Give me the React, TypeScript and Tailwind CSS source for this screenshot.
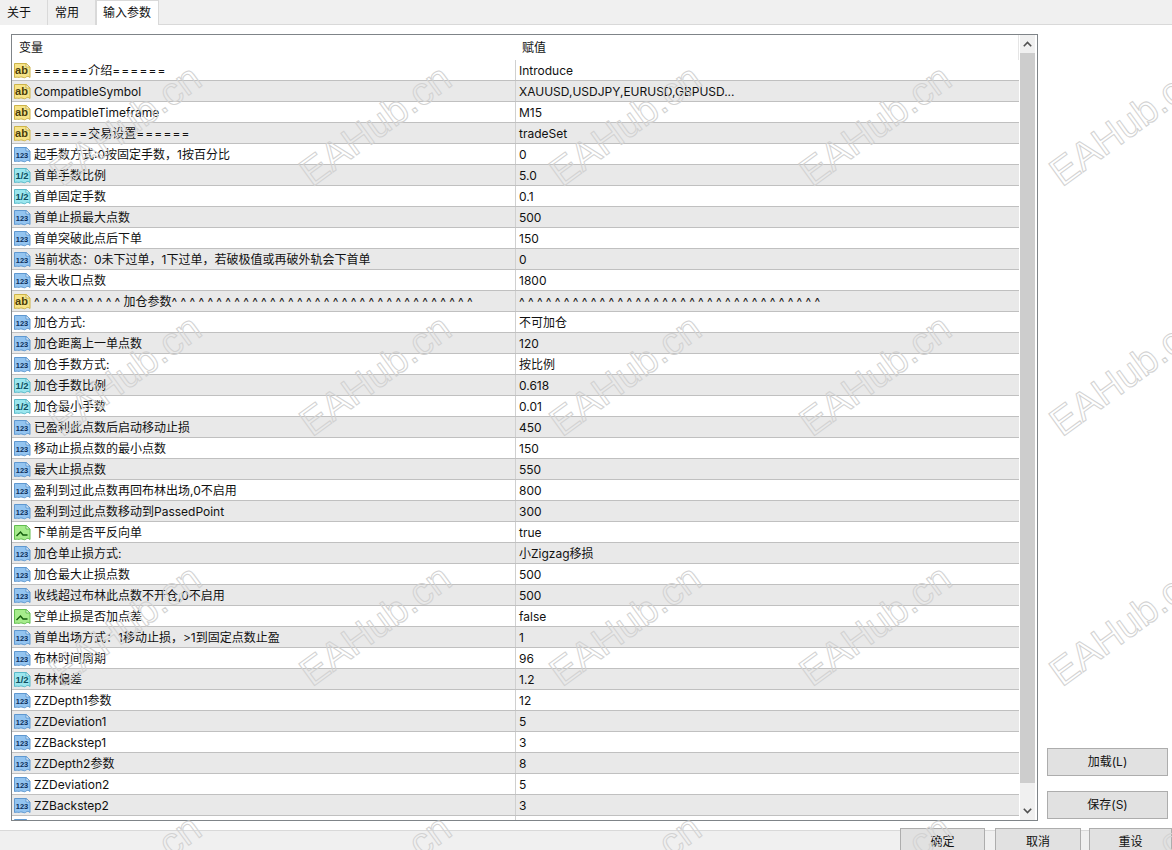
import React from 'react';

type ParamType = 'str' | 'int' | 'dbl' | 'bool';
type Param = [ParamType, string, string];

const params: Param[] = [
  ['str', '======介绍======', 'Introduce'],
  ['str', 'CompatibleSymbol', 'XAUUSD,USDJPY,EURUSD,GBPUSD...'],
  ['str', 'CompatibleTimeframe', 'M15'],
  ['str', '======交易设置======', 'tradeSet'],
  ['int', '起手数方式:0按固定手数，1按百分比', '0'],
  ['dbl', '首单手数比例', '5.0'],
  ['dbl', '首单固定手数', '0.1'],
  ['int', '首单止损最大点数', '500'],
  ['int', '首单突破此点后下单', '150'],
  ['int', '当前状态：0未下过单，1下过单，若破极值或再破外轨会下首单', '0'],
  ['int', '最大收口点数', '1800'],
  ['str', '^^^^^^^^^^加仓参数^^^^^^^^^^^^^^^^^^^^^^^^^^^^^^^^^^', '^^^^^^^^^^^^^^^^^^^^^^^^^^^^^^^^^^'],
  ['int', '加仓方式:', '不可加仓'],
  ['int', '加仓距离上一单点数', '120'],
  ['int', '加仓手数方式:', '按比例'],
  ['dbl', '加仓手数比例', '0.618'],
  ['dbl', '加仓最小手数', '0.01'],
  ['int', '已盈利此点数后启动移动止损', '450'],
  ['int', '移动止损点数的最小点数', '150'],
  ['int', '最大止损点数', '550'],
  ['int', '盈利到过此点数再回布林出场,0不启用', '800'],
  ['int', '盈利到过此点数移动到PassedPoint', '300'],
  ['bool', '下单前是否平反向单', 'true'],
  ['int', '加仓单止损方式:', '小Zigzag移损'],
  ['int', '加仓最大止损点数', '500'],
  ['int', '收线超过布林此点数不开仓,0不启用', '500'],
  ['bool', '空单止损是否加点差', 'false'],
  ['int', '首单出场方式：1移动止损，>1到固定点数止盈', '1'],
  ['int', '布林时间周期', '96'],
  ['dbl', '布林偏差', '1.2'],
  ['int', 'ZZDepth1参数', '12'],
  ['int', 'ZZDeviation1', '5'],
  ['int', 'ZZBackstep1', '3'],
  ['int', 'ZZDepth2参数', '8'],
  ['int', 'ZZDeviation2', '5'],
  ['int', 'ZZBackstep2', '3'],
  ['int', '', ''],
];

// 文件形状的小图标，底边带波浪
const iconColors: Record<ParamType, { fill: string; stroke: string; ink: string }> = {
  str: { fill: '#f7e488', stroke: '#cdb44a', ink: '#4a3c08' },
  int: { fill: '#93c4f0', stroke: '#5f98d0', ink: '#0c2f5c' },
  dbl: { fill: '#9be6ee', stroke: '#58b8c8', ink: '#0e4f60' },
  bool: { fill: '#a6ec8c', stroke: '#62bd50', ink: '#135c0c' },
};

const iconLabel: Record<ParamType, string> = { str: 'ab', int: '123', dbl: '1/2', bool: '' };

function ParamIcon({ type }: { type: ParamType }) {
  const c = iconColors[type];
  return (
    <svg width="17" height="17" viewBox="0 0 17 17" className="shrink-0">
      <path
        d="M0.5 1.5H12L16 5V15.5C14.5 14 13 14 11.5 15.5C10 16.5 8.5 14.5 6.5 15C5 16 2.5 14.5 0.5 15.5Z"
        fill={c.fill}
        stroke={c.stroke}
      />
      <path d="M12 1.5V5H16Z" fill="#fff" stroke={c.stroke} />
      {type === 'bool' ? (
        <path d="M2.5 12L6.5 8L9 11H13.5" fill="none" stroke={c.ink} strokeWidth="1.4" />
      ) : (
        <text
          x={type === 'str' ? 7.5 : 8}
          y={type === 'str' ? 11.5 : 12}
          textAnchor="middle"
          fill={c.ink}
          fontFamily="'Liberation Sans', sans-serif"
          fontWeight={700}
          fontSize={type === 'str' ? 11 : type === 'int' ? 7.5 : 9.5}
        >
          {iconLabel[type]}
        </text>
      )}
    </svg>
  );
}

// = 和 ^ 在原图字体里更宽，这里单独调字距
function Label({ text }: { text: string }) {
  return (
    <span className="translate-y-[1px]">
      {text.split(/(=+|\^+)/).map((part, i) => {
        if (part.startsWith('=')) {
          return (
            <span key={i} className="tracking-[1.1px]">
              {part}
            </span>
          );
        }
        if (part.startsWith('^')) {
          return (
            <span key={i} className="tracking-[3.3px]">
              {part}
            </span>
          );
        }
        return part;
      })}
    </span>
  );
}

function Row({ param, index }: { param: Param; index: number }) {
  const [type, name, value] = param;
  return (
    <div
      className={`flex h-[21px] shrink-0 border-b border-[#c0c0c0] ${index % 2 === 1 ? 'bg-[#e9e9e9]' : 'bg-white'}`}
    >
      <div className="flex w-[504px] items-center gap-[3px] overflow-hidden border-r border-[#d0d0d0] pl-[2px] whitespace-nowrap">
        <ParamIcon type={type} />
        <Label text={name} />
      </div>
      <div className="flex flex-1 items-center overflow-hidden pl-[3px] whitespace-nowrap">
        <Label text={value} />
      </div>
    </div>
  );
}

function Tab({ label, active, className }: { label: string; active?: boolean; className: string }) {
  return (
    <div
      className={`flex h-[25px] items-center border-r border-[#d9d9d9] ${className} ${
        active ? 'border-t border-l bg-white' : 'bg-[#f0f0f0]'
      }`}
    >
      {label}
    </div>
  );
}

function Btn({ label, className }: { label: string; className: string }) {
  return (
    <div className={`flex items-center justify-center border border-[#adadad] bg-[#e1e1e1] ${className}`}>{label}</div>
  );
}

function Scrollbar() {
  return (
    <div className="mr-[2px] ml-[1px] flex w-[15px] shrink-0 flex-col bg-[#f0f0f0]">
      <div className="flex h-[18px] items-center justify-center">
        <svg width="9" height="6" viewBox="0 0 9 6">
          <path d="M0.8 5.2L4.5 1.5L8.2 5.2" fill="none" stroke="#505050" strokeWidth="1.6" />
        </svg>
      </div>
      <div className="h-[730px] bg-[#cdcdcd]" />
      <div className="flex flex-1 items-end justify-center pb-[6px]">
        <svg width="9" height="6" viewBox="0 0 9 6">
          <path d="M0.8 0.8L4.5 4.5L8.2 0.8" fill="none" stroke="#505050" strokeWidth="1.6" />
        </svg>
      </div>
    </div>
  );
}

const marks: [number, number][] = [];
for (const y of [125, 375, 625, 875]) {
  for (const x of [125, 375, 625, 875, 1125]) {
    marks.push([x, y]);
  }
}

function Watermark() {
  return (
    <div className="pointer-events-none absolute inset-0 overflow-hidden">
      {marks.map(([x, y]) => (
        <div
          key={`${x}-${y}`}
          className="absolute -translate-x-1/2 -translate-y-1/2 -rotate-[36deg] font-['Liberation_Sans',sans-serif] text-[39px] leading-none whitespace-nowrap text-transparent [-webkit-text-stroke:1px_#d2d2d2]"
          style={{ left: x, top: y }}
        >
          EAHub.cn
        </div>
      ))}
    </div>
  );
}

export default function App() {
  return (
    <div className="relative flex h-[850px] w-[1172px] flex-col overflow-hidden bg-white font-['Inter','Noto_Sans_CJK_SC',sans-serif] text-[12px] text-[#111]">
      <div className="flex h-[25px] shrink-0 border-b border-[#d9d9d9] bg-[#f0f0f0]">
        <Tab label="关于" className="w-[48px] pl-[7px]" />
        <Tab label="常用" className="w-[48px] pl-[7px]" />
        <Tab label="输入参数" className="w-[63px] pl-[6px]" active />
      </div>

      <div className="flex min-h-0 flex-1">
        <div className="mt-[9px] mb-[9px] ml-[11px] flex w-[1027px] border border-[#7f8488] bg-white">
          <div className="flex min-w-0 flex-1 flex-col overflow-hidden">
            <div className="flex h-[25px] shrink-0 items-center border-r border-[#e5e5e5]">
              <div className="w-[510px] pl-[7px]">变量</div>
              <div>赋值</div>
            </div>
            {params.map((p, i) => (
              <Row key={i} param={p} index={i} />
            ))}
          </div>
          <Scrollbar />
        </div>

        <div className="ml-[9px] flex w-[121px] flex-col justify-end gap-[15px] pb-[11px]">
          <Btn label="加载(L)" className="h-[28px]" />
          <Btn label="保存(S)" className="h-[28px]" />
        </div>
      </div>

      <div className="flex h-[20px] shrink-0 justify-end border-t border-[#d9d9d9] bg-[#f0f0f0]">
        <Btn label="确定" className="-mt-[3px] h-[27px] w-[85px]" />
        <Btn label="取消" className="-mt-[3px] ml-[10px] h-[27px] w-[86px]" />
        <Btn label="重设" className="-mt-[3px] ml-[8px] h-[27px] w-[83px]" />
      </div>

      <Watermark />
    </div>
  );
}
